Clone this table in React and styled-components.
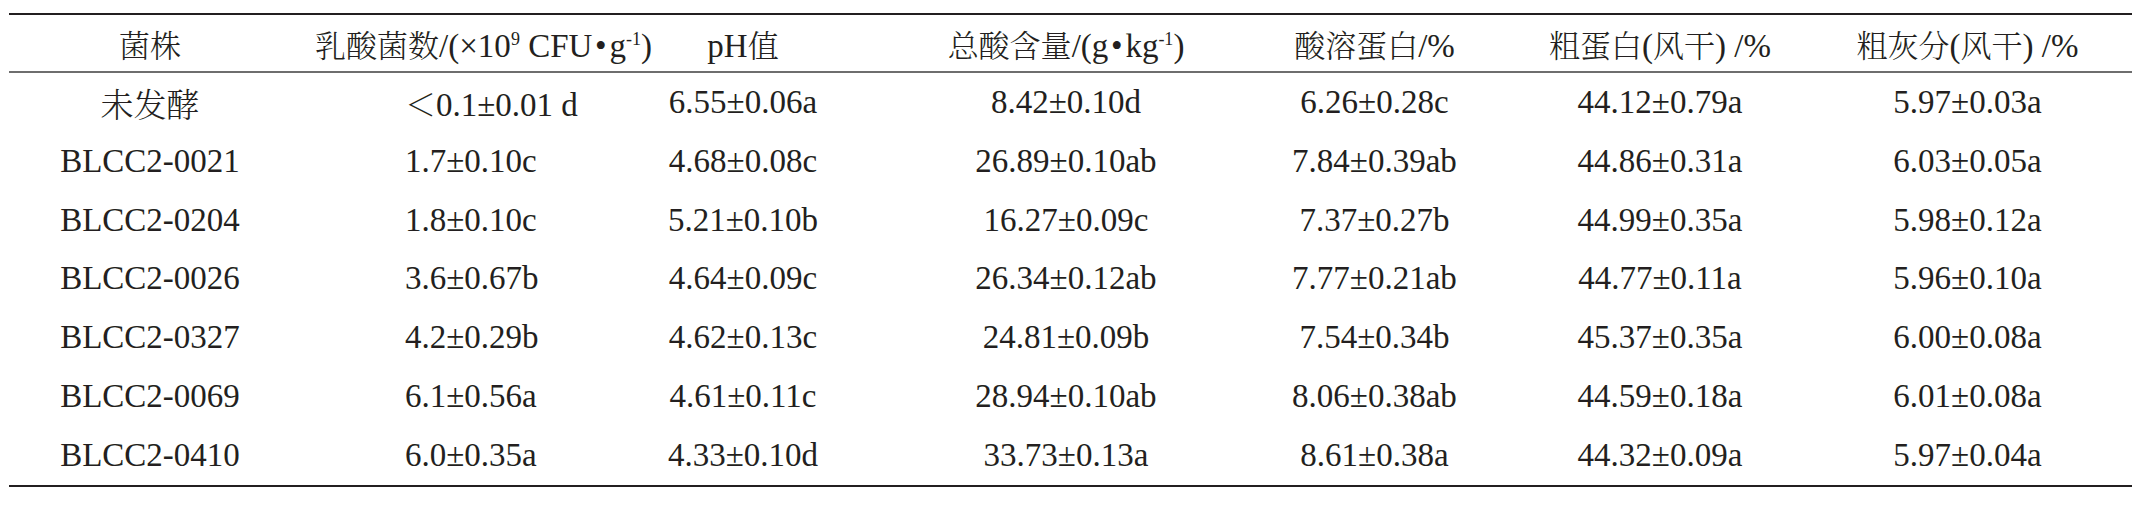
import React from 'react';
import styled, { createGlobalStyle } from 'styled-components';

const GlobalStyle = createGlobalStyle`
  html, body {
    margin: 0;
    padding: 0;
    background: #ffffff;
  }
`;

const COLS = '300px 297px 298px 316px 297px 296px 319px';

const Page = styled.div`
  padding: 13px 0 0 9px;
`;

const Table = styled.div`
  width: 2123px;
  font-family: "Liberation Serif", "Times New Roman", "Noto Sans CJK SC", serif;
  font-size: 33px;
  color: #231f20;
  border-top: 2px solid #231f20;
  border-bottom: 2px solid #231f20;
`;

const HeadRow = styled.div`
  display: grid;
  grid-template-columns: ${COLS};
  height: 56px;
  border-bottom: 2px solid #6e6e6e;
`;

const Body = styled.div`
  display: grid;
  grid-template-rows: repeat(7, 1fr);
  height: 412px;
`;

const Row = styled.div`
  display: grid;
  grid-template-columns: ${COLS};
`;

const Cell = styled.div`
  display: flex;
  align-items: center;
  justify-content: ${p => (p.$left != null ? 'flex-start' : 'center')};
  white-space: nowrap;
  min-width: 0;
  padding-left: ${p => (p.$left != null ? p.$left : Math.max(0, 2 * p.$shift))}px;
  padding-right: ${p => (p.$left != null ? 0 : Math.max(0, -2 * p.$shift))}px;
`;

const Text = styled.span`
  flex: none;
`;

const Han = styled.span`
  font-family: "Noto Serif CJK SC", "Noto Sans CJK SC", serif;
  font-size: ${p => p.$size || 33}px;
  font-weight: 300;
`;

const HeadHan = styled(Han).attrs({ $size: 31 })``;

const Sup = styled.sup`
  font-size: 18px;
  vertical-align: 12px;
  line-height: 0;
`;

const columns = [
  { shift: -9, headShift: -9 },
  { left: 96, headShift: 26 },
  { shift: -12, headShift: -12 },
  { shift: 4, headShift: 4 },
  { shift: 6, headShift: 6 },
  { shift: -5, headShift: -5 },
  { shift: -5, headShift: -5 },
];

const dot = '\u200A•\u200A';

const headers = [
  <HeadHan>菌株</HeadHan>,
  <><HeadHan>乳酸菌数</HeadHan>/(×10<Sup>9</Sup> CFU{dot}g<Sup>-1</Sup>)</>,
  <>pH<HeadHan>值</HeadHan></>,
  <><HeadHan>总酸含量</HeadHan>/(g{dot}kg<Sup>-1</Sup>)</>,
  <><HeadHan>酸溶蛋白</HeadHan>/%</>,
  <><HeadHan>粗蛋白</HeadHan>(<HeadHan>风干</HeadHan>) /%</>,
  <><HeadHan>粗灰分</HeadHan>(<HeadHan>风干</HeadHan>) /%</>,
];

const rows = [
  [<Han>未发酵</Han>, <><Han $size={31}>＜</Han>0.1±0.01 d</>, '6.55±0.06a', '8.42±0.10d', '6.26±0.28c', '44.12±0.79a', '5.97±0.03a'],
  ['BLCC2-0021', '1.7±0.10c', '4.68±0.08c', '26.89±0.10ab', '7.84±0.39ab', '44.86±0.31a', '6.03±0.05a'],
  ['BLCC2-0204', '1.8±0.10c', '5.21±0.10b', '16.27±0.09c', '7.37±0.27b', '44.99±0.35a', '5.98±0.12a'],
  ['BLCC2-0026', '3.6±0.67b', '4.64±0.09c', '26.34±0.12ab', '7.77±0.21ab', '44.77±0.11a', '5.96±0.10a'],
  ['BLCC2-0327', '4.2±0.29b', '4.62±0.13c', '24.81±0.09b', '7.54±0.34b', '45.37±0.35a', '6.00±0.08a'],
  ['BLCC2-0069', '6.1±0.56a', '4.61±0.11c', '28.94±0.10ab', '8.06±0.38ab', '44.59±0.18a', '6.01±0.08a'],
  ['BLCC2-0410', '6.0±0.35a', '4.33±0.10d', '33.73±0.13a', '8.61±0.38a', '44.32±0.09a', '5.97±0.04a'],
];

function App() {
  return (
    <>
      <GlobalStyle />
      <Page>
        <Table>
          <HeadRow>
            {headers.map((h, i) => (
              <Cell key={i} $shift={columns[i].headShift}>
                <Text>{h}</Text>
              </Cell>
            ))}
          </HeadRow>
          <Body>
            {rows.map((r, ri) => (
              <Row key={ri}>
                {r.map((cell, ci) => (
                  <Cell key={ci} $shift={columns[ci].shift || 0} $left={columns[ci].left}>
                    <Text>{cell}</Text>
                  </Cell>
                ))}
              </Row>
            ))}
          </Body>
        </Table>
      </Page>
    </>
  );
}

export default App;
